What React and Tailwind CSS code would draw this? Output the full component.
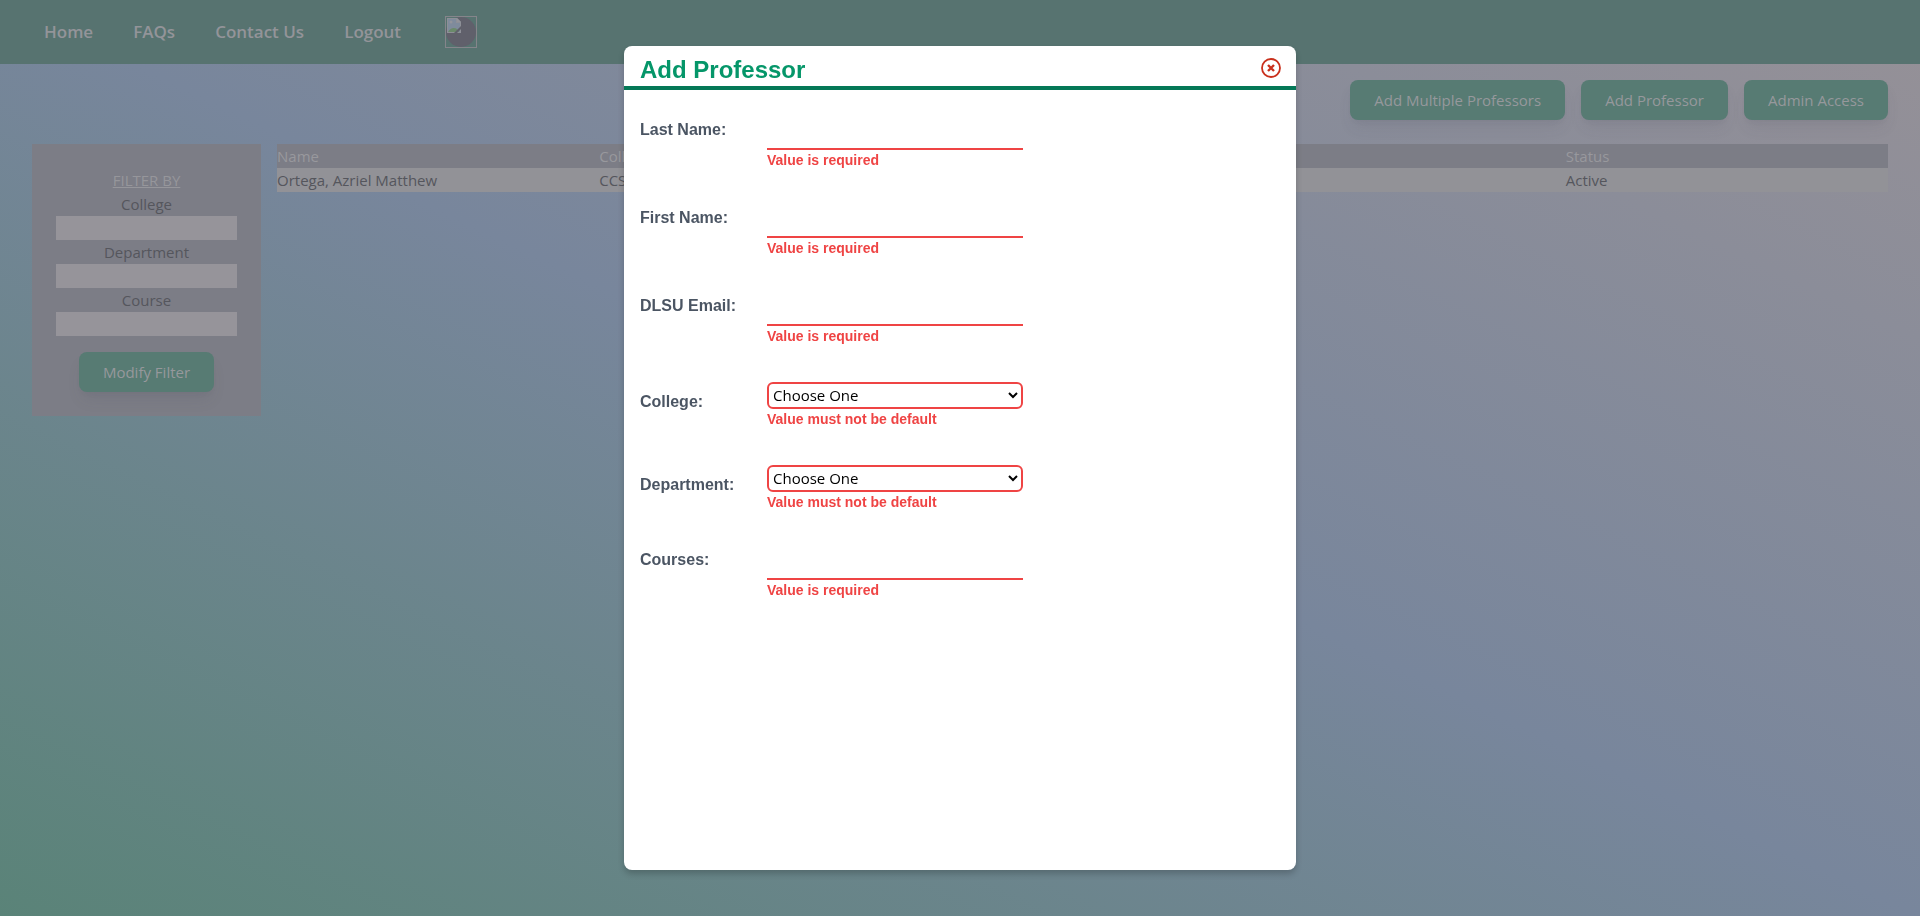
const font = "font-['Open_Sans','Noto_Sans',sans-serif]";

const navLinks = ["Home", "FAQs", "Contact Us", "Logout"];
const actions = ["Add Multiple Professors", "Add Professor", "Admin Access"];
const filters = ["College", "Department", "Course"];

const fields = [
  { id: "last-name", label: "Last Name:", kind: "text" },
  { id: "first-name", label: "First Name:", kind: "text" },
  { id: "email", label: "DLSU Email:", kind: "text" },
  { id: "college", label: "College:", kind: "select" },
  { id: "department", label: "Department:", kind: "select" },
  { id: "courses", label: "Courses:", kind: "text" },
];

function GreenButton({ children }) {
  return (
    <button
      type="button"
      className="h-10 rounded-lg bg-[#577b73] px-6 text-[15px] text-[#96989c] shadow-[0_10px_15px_-3px_rgba(70,65,85,0.1),0_4px_6px_-4px_rgba(70,65,85,0.1)]"
    >
      {children}
    </button>
  );
}

function Avatar() {
  return (
    <button type="button" aria-label="Profile" className="ml-1 size-8 border border-[#85858b]">
      <svg viewBox="0 0 30 30" className="size-full" aria-hidden="true">
        <circle cx="15" cy="15" r="15" fill="#60606b" />
        <path d="M1 1h10l4 4v11H1z" fill="#8d8f97" />
        <path d="M2 2h8v4h4v9H2z" fill="#7f8b9c" />
        <path d="M2 15c2-4 6-5 9-3l2 3z" fill="#6b8a6b" />
        <circle cx="5" cy="5" r="1.5" fill="#92949b" />
        <path d="M11 1v4h4z" fill="#92939a" />
        <path d="M8 16 16 8v3l-5 5z" fill="#60606b" />
      </svg>
    </button>
  );
}

function Navbar() {
  return (
    <nav className="flex h-16 items-center gap-10 bg-[#577370] px-11">
      {navLinks.map((label) => (
        <a key={label} href="#" className="text-[17px] font-semibold text-[#939499]">
          {label}
        </a>
      ))}
      <Avatar />
    </nav>
  );
}

function FilterPanel() {
  return (
    <form className="flex w-[229px] shrink-0 flex-col items-center self-start bg-[#7c7d86] p-6 text-[15px] leading-6 text-[#55565d]">
      <h2 className="text-[#96969b] underline">FILTER BY</h2>
      {filters.map((label) => (
        <div key={label} className="flex w-full flex-col text-center">
          <label htmlFor={`filter-${label}`}>{label}</label>
          <input id={`filter-${label}`} className="h-6 w-full bg-[#96949a]" />
        </div>
      ))}
      <div className="mt-4">
        <GreenButton>Modify Filter</GreenButton>
      </div>
    </form>
  );
}

function ProfessorTable() {
  return (
    <table className="w-full table-fixed self-start text-left text-[15px] leading-6">
      <thead className="bg-[#7c7d86] text-[#98989d]">
        <tr>
          <th className="p-0 font-normal">Name</th>
          <th className="p-0 font-normal">College</th>
          <th className="p-0" />
          <th className="p-0" />
          <th className="p-0 font-normal">Status</th>
        </tr>
      </thead>
      <tbody className="bg-[#929297] text-[#55565d]">
        <tr>
          <td className="p-0">Ortega, Azriel Matthew</td>
          <td className="p-0">CCS</td>
          <td className="p-0" />
          <td className="p-0" />
          <td className="p-0">Active</td>
        </tr>
      </tbody>
    </table>
  );
}

function Field({ id, label, kind }) {
  const isSelect = kind === "select";
  return (
    <div className={isSelect ? "mt-2 flex" : "flex"}>
      <label htmlFor={id} className="w-[127px] shrink-0 pt-2 text-base leading-6 font-bold text-[#4b5563]">
        {label}
      </label>
      <div className="flex w-64 flex-col">
        {isSelect ? (
          <select
            id={id}
            className="h-[27px] rounded-md border-2 border-[#ef4444] bg-white font-['Open_Sans','Noto_Sans',sans-serif] text-[15px] text-black"
          >
            <option>Choose One</option>
          </select>
        ) : (
          <input id={id} className="h-10 border-b-2 border-[#ef4444] px-1 outline-none" />
        )}
        <p className="text-sm leading-5 font-bold text-[#ef4444]">
          {isSelect ? "Value must not be default" : "Value is required"}
        </p>
      </div>
    </div>
  );
}

function AddProfessorModal() {
  return (
    <div className="fixed inset-0 flex items-center justify-center">
      <section
        role="dialog"
        aria-label="Add Professor"
        className="flex h-[90%] w-[35%] flex-col rounded-lg bg-white font-['Liberation_Sans',Arial,sans-serif] shadow-[0_4px_6px_rgba(0,0,0,0.2)]"
      >
        <header className="flex items-center justify-between border-b-4 border-[#047857] px-4 pt-1">
          <h1 className="pt-1 text-2xl leading-8 font-bold text-[#059669]">Add Professor</h1>
          <button type="button" aria-label="Close" className="-mr-1">
            <svg viewBox="0 0 26 26" className="size-[26px]" fill="none" stroke="#c9301c" aria-hidden="true">
              <circle cx="13" cy="13" r="9" strokeWidth="1.8" />
              <path d="m10 10 6 6m0-6-6 6" strokeWidth="2.4" />
            </svg>
          </button>
        </header>
        <form className="flex flex-col gap-7 px-4 py-5">
          {fields.map((field) => (
            <Field key={field.id} {...field} />
          ))}
        </form>
      </section>
    </div>
  );
}

export default function App() {
  return (
    <div
      className={`flex min-h-screen flex-col bg-linear-to-tr from-[#5a8378] via-[#78869c] to-[#969197] ${font}`}
    >
      <Navbar />
      <main className="flex flex-col gap-6 px-8 py-4">
        <div className="flex justify-end gap-4">
          {actions.map((label) => (
            <GreenButton key={label}>{label}</GreenButton>
          ))}
        </div>
        <div className="flex gap-4">
          <FilterPanel />
          <ProfessorTable />
        </div>
      </main>
      <AddProfessorModal />
    </div>
  );
}
